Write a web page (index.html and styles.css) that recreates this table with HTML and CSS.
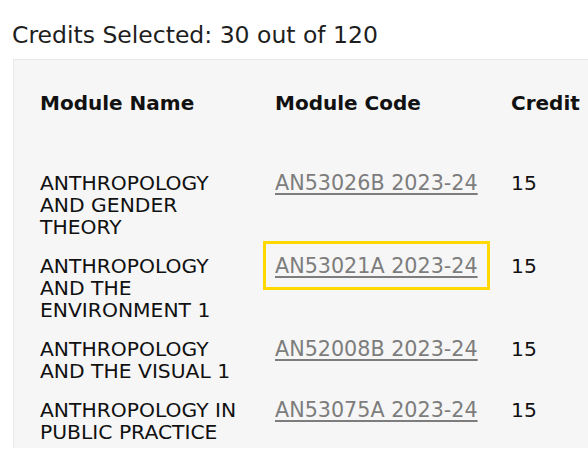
FILE: index.html
```html
<!DOCTYPE html>
<html lang="en">
<head>
<meta charset="utf-8">
<title>Credits</title>
<link rel="stylesheet" href="styles.css">
</head>
<body>
  <h1 class="credits">Credits Selected: 30 out of 120</h1>
  <div class="panel">
    <div class="grid">
      <div class="head">Module Name</div>
      <div class="head">Module Code</div>
      <div class="head">Credit</div>

      <div class="cell name">ANTHROPOLOGY AND GENDER THEORY</div>
      <div class="cell"><a class="code" href="#">AN53026B 2023-24</a></div>
      <div class="cell">15</div>

      <div class="cell name">ANTHROPOLOGY AND THE ENVIRONMENT 1</div>
      <div class="cell"><a class="code highlight" href="#">AN53021A 2023-24</a></div>
      <div class="cell">15</div>

      <div class="cell name">ANTHROPOLOGY AND THE VISUAL 1</div>
      <div class="cell"><a class="code" href="#">AN52008B 2023-24</a></div>
      <div class="cell">15</div>

      <div class="cell name">ANTHROPOLOGY IN PUBLIC PRACTICE</div>
      <div class="cell"><a class="code" href="#">AN53075A 2023-24</a></div>
      <div class="cell">15</div>
    </div>
  </div>
</body>
</html>
```

FILE: styles.css
```css
html, body {
  margin: 0;
  padding: 0;
  overflow: hidden;
  background: #ffffff;
}

body {
  font-family: "DejaVu Sans", Verdana, sans-serif;
  color: #111111;
  width: 588px;
  height: 450px;
}

.credits {
  margin: 0;
  padding: 21px 0 0 12px;
  font-size: 23.5px;
  font-weight: normal;
  line-height: 29px;
  color: #1e1e1e;
}

.panel {
  margin: 9px 0 0 13px;
  width: 640px;
  height: 389px;
  background: #f6f6f6;
  border-top: 1px solid #e8e8e8;
  border-left: 1px solid #e8e8e8;
  padding: 32px 0 0 26px;
  box-sizing: border-box;
}

.grid {
  display: grid;
  grid-template-columns: 235px 236px 100px;
  row-gap: 17px;
}

.head {
  font-weight: bold;
  font-size: 20px;
  line-height: 22px;
  color: #111111;
  margin-bottom: 41px;
}

.cell {
  font-size: 20.3px;
  line-height: 22px;
  color: #111111;
}

.name {
  padding-right: 30px;
}

.code {
  font-size: 20.7px;
  color: #7d7d7d;
  text-decoration: underline;
  text-underline-offset: 3px;
}

.highlight {
  position: relative;
}

.highlight::after {
  content: "";
  position: absolute;
  left: -12px;
  right: -12px;
  top: -13px;
  bottom: -12px;
  border: 3px solid #ffd800;
}
```
